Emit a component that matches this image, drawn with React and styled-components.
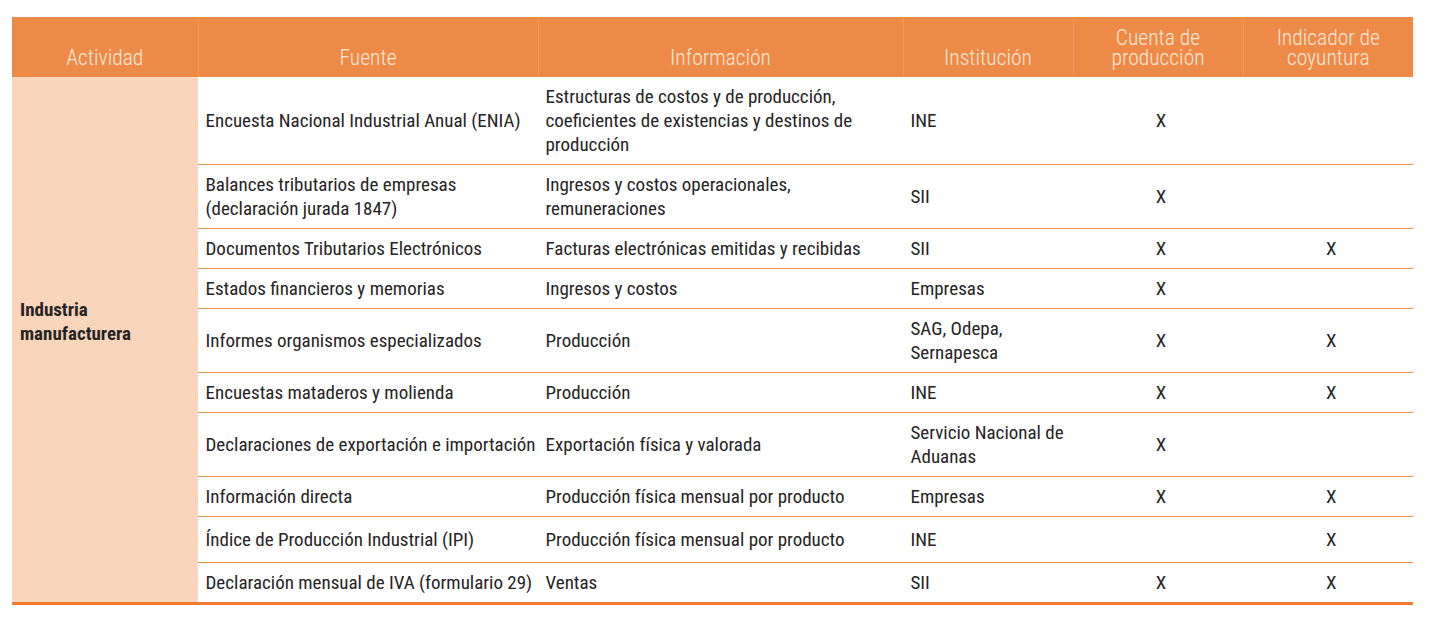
import React from "react";
import styled, { createGlobalStyle } from "styled-components";

const GlobalStyle = createGlobalStyle`
  *, *::before, *::after {
    box-sizing: border-box;
  }
  body {
    margin: 0;
    background: #ffffff;
    font-family: "Roboto Condensed", "Liberation Sans", sans-serif;
  }
`;

const Page = styled.div`
  padding: 17px 22px 0 12px;
`;

const Table = styled.table`
  width: 1401px;
  border-collapse: collapse;
  table-layout: fixed;
  border-bottom: 3px solid #ef7a30;
  color: #262324;
  font-size: 19px;
`;

const HeadCell = styled.th`
  width: ${(p) => p.$w}px;
  height: 60px;
  padding: 0 4px 9px;
  background: #ee8a48;
  color: #fde8d8;
  font-weight: 300;
  font-size: 21.5px;
  line-height: 20px;
  text-align: center;
  vertical-align: bottom;
  border-left: 1px solid rgba(255, 255, 255, 0.12);

  &:first-child {
    border-left: none;
  }
`;

const ActivityCell = styled.td`
  background: #f9d6bb;
  padding: 0 8px 36px;
  vertical-align: middle;
  font-weight: 700;
  line-height: 24px;
`;

const Cell = styled.td`
  padding: ${(p) => (p.$tall ? "11px" : "8px")} ${(p) => (p.$center ? "1px" : "7px")}
    ${(p) => (p.$tall ? "10px" : "7px")} ${(p) => (p.$center ? "7px" : "7px")};
  line-height: 24px;
  vertical-align: middle;
  text-align: ${(p) => (p.$center ? "center" : "left")};
  border-bottom: 1px solid #f08c4e;
  border-left: 1px solid #ffffff;
  white-space: nowrap;
`;

const columns = [
  { label: "Actividad", w: 186 },
  { label: "Fuente", w: 340 },
  { label: "Información", w: 365 },
  { label: "Institución", w: 170 },
  { label: ["Cuenta de", "producción"], w: 170 },
  { label: ["Indicador de", "coyuntura"], w: 170 },
];

const rows = [
  {
    fuente: "Encuesta Nacional Industrial Anual (ENIA)",
    info: ["Estructuras de costos y de producción,", "coeficientes de existencias y destinos de", "producción"],
    inst: "INE",
    cuenta: true,
    indicador: false,
  },
  {
    fuente: ["Balances tributarios de empresas", "(declaración jurada 1847)"],
    info: ["Ingresos y costos operacionales,", "remuneraciones"],
    inst: "SII",
    cuenta: true,
    indicador: false,
  },
  {
    fuente: "Documentos Tributarios Electrónicos",
    info: "Facturas electrónicas emitidas y recibidas",
    inst: "SII",
    cuenta: true,
    indicador: true,
  },
  {
    fuente: "Estados financieros y memorias",
    info: "Ingresos y costos",
    inst: "Empresas",
    cuenta: true,
    indicador: false,
  },
  {
    fuente: "Informes organismos especializados",
    info: "Producción",
    inst: ["SAG, Odepa,", "Sernapesca"],
    cuenta: true,
    indicador: true,
  },
  {
    fuente: "Encuestas mataderos y molienda",
    info: "Producción",
    inst: "INE",
    cuenta: true,
    indicador: true,
  },
  {
    fuente: "Declaraciones de exportación e importación",
    info: "Exportación física y valorada",
    inst: ["Servicio Nacional de", "Aduanas"],
    cuenta: true,
    indicador: false,
  },
  {
    fuente: "Información directa",
    info: "Producción física mensual por producto",
    inst: "Empresas",
    cuenta: true,
    indicador: true,
  },
  {
    fuente: "Índice de Producción Industrial (IPI)",
    info: "Producción física mensual por producto",
    inst: "INE",
    cuenta: false,
    indicador: true,
    tall: true,
  },
  {
    fuente: "Declaración mensual de IVA (formulario 29)",
    info: "Ventas",
    inst: "SII",
    cuenta: true,
    indicador: true,
  },
];

function Lines({ text }) {
  if (!Array.isArray(text)) return text;
  return text.map((line, i) => (
    <React.Fragment key={i}>
      {i > 0 && <br />}
      {line}
    </React.Fragment>
  ));
}

export default function App() {
  return (
    <Page>
      <GlobalStyle />
      <Table>
        <thead>
          <tr>
            {columns.map((c, i) => (
              <HeadCell key={i} $w={c.w}>
                <Lines text={c.label} />
              </HeadCell>
            ))}
          </tr>
        </thead>
        <tbody>
          {rows.map((r, i) => (
            <tr key={i}>
              {i === 0 && (
                <ActivityCell rowSpan={rows.length}>
                  Industria
                  <br />
                  manufacturera
                </ActivityCell>
              )}
              <Cell $tall={r.tall}>
                <Lines text={r.fuente} />
              </Cell>
              <Cell $tall={r.tall}>
                <Lines text={r.info} />
              </Cell>
              <Cell $tall={r.tall}>
                <Lines text={r.inst} />
              </Cell>
              <Cell $tall={r.tall} $center>
                {r.cuenta ? "X" : ""}
              </Cell>
              <Cell $tall={r.tall} $center>
                {r.indicador ? "X" : ""}
              </Cell>
            </tr>
          ))}
        </tbody>
      </Table>
    </Page>
  );
}
